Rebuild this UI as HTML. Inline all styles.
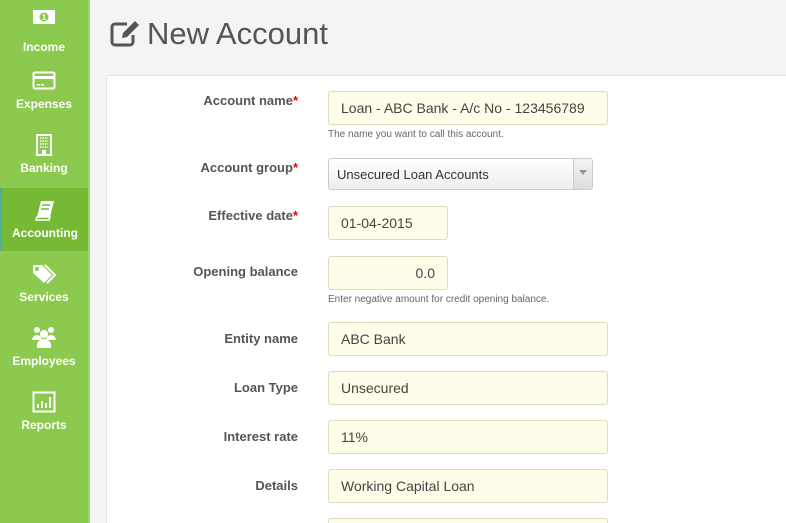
<!DOCTYPE html><html><head><style>
html,body{margin:0;padding:0;overflow:hidden;width:786px;height:523px}
body{font-family:"Liberation Sans",sans-serif}
#w{position:relative;width:786px;height:523px;overflow:hidden;background:#f3f4f6}
.sb{position:absolute;left:0;top:0;width:88px;height:523px;background:#8bc94f;border-right:2px solid #9fd66a}
.it{position:absolute;left:0;width:88px;text-align:center;color:#fff;font-weight:bold;font-size:12px}
.it svg{display:block;margin:0 auto}
.act{background:#76b935;border-left:2px solid #4cb0a0;box-sizing:border-box}
h1{position:absolute;left:147px;top:16px;margin:0;font-weight:normal;font-size:31px;color:#555}
.panel{position:absolute;left:106px;top:75px;width:680px;height:448px;background:#fff;border:1px solid #e1e3e6;border-bottom:0;border-right:0;border-radius:3px 0 0 0}
.l{position:absolute;right:488px;width:200px;text-align:right;font-weight:bold;font-size:13px;color:#555}
.l b{color:#e00}
.in{position:absolute;left:328px;height:32px;border:1px solid #dfdcc0;background:#fdfde9;border-radius:3px;font-size:14px;color:#444;line-height:32px;padding-left:12px;width:266px}
.h{position:absolute;left:328px;font-size:10px;color:#666}
</style></head><body><div id="w">
<div class="sb">
<div class="it" style="top:0"><svg width="24" height="20" viewBox="0 0 24 20" style="margin-top:7px"><rect x="1" y="3" width="22" height="14" fill="#fff"/><circle cx="12" cy="10" r="4.5" fill="#8bc94f"/><text x="12" y="13" font-size="8" text-anchor="middle" fill="#fff" font-family="Liberation Sans">1</text></svg><div style="margin-top:13px">Income</div></div>
<div class="it" style="top:70px"><svg width="24" height="20" viewBox="0 0 24 20"><rect x="1.5" y="2.5" width="21" height="16" rx="1.5" fill="none" stroke="#fff" stroke-width="2"/><rect x="1" y="6" width="22" height="3" fill="#fff"/><rect x="5" y="14" width="3" height="1.5" fill="#fff"/><rect x="9" y="14" width="3" height="1.5" fill="#fff"/></svg><div style="margin-top:7px">Expenses</div></div>
<div class="it" style="top:134px"><svg width="20" height="22" viewBox="0 0 20 22"><rect x="3" y="1" width="14" height="20" fill="none" stroke="#fff" stroke-width="2"/><path d="M6 4h8M6 7h8M6 10h8M6 13h8" stroke="#fff" stroke-width="1.5" stroke-dasharray="1.5 1"/><rect x="8" y="16" width="4" height="5" fill="#fff"/></svg><div style="margin-top:5px">Banking</div></div>
<div class="it act" style="top:188px;height:63px"><svg width="22" height="22" viewBox="0 0 22 22" style="margin-top:11px"><path d="M7 2h13l-4 16H3z" fill="#fff"/><path d="M3 18h13l-1 3H2z" fill="none" stroke="#fff" stroke-width="1.5"/><path d="M8 6h8M7 10h8" stroke="#76b935" stroke-width="1.5"/></svg><div style="margin-top:5px">Accounting</div></div>
<div class="it" style="top:263px"><svg width="26" height="22" viewBox="0 0 26 22"><path d="M2 2h9l10 10-8 8L2 10z" fill="#fff"/><circle cx="6" cy="6" r="2" fill="#8bc94f"/><path d="M14 2l10 10-8 8" fill="none" stroke="#fff" stroke-width="2"/></svg><div style="margin-top:5px">Services</div></div>
<div class="it" style="top:326px"><svg width="26" height="22" viewBox="0 0 26 22"><circle cx="6" cy="4" r="3" fill="#fff"/><circle cx="20" cy="4" r="3" fill="#fff"/><circle cx="13" cy="8" r="4" fill="#fff"/><path d="M1 14a5 5 0 0 1 10 0zM15 14a5 5 0 0 1 10 0z" fill="#fff"/><path d="M6 22v-3a7 6 0 0 1 14 0v3z" fill="#fff"/></svg><div style="margin-top:6px">Employees</div></div>
<div class="it" style="top:391px"><svg width="24" height="22" viewBox="0 0 24 22"><rect x="1.5" y="1.5" width="21" height="19" fill="none" stroke="#fff" stroke-width="2"/><rect x="5" y="13" width="2" height="4" fill="#fff"/><rect x="9" y="10" width="2" height="7" fill="#fff"/><rect x="13" y="12" width="2" height="5" fill="#fff"/><rect x="17" y="6" width="2" height="11" fill="#fff"/></svg><div style="margin-top:5px">Reports</div></div>
</div>
<svg style="position:absolute;left:110px;top:20px" width="33" height="27" viewBox="0 0 33 27"><path d="M17 4H5a3 3 0 0 0-3 3v15a3 3 0 0 0 3 3h15a3 3 0 0 0 3-3v-7" fill="none" stroke="#555" stroke-width="3"/><path d="M12 18l1-5L25 1l4 4-12 12z" fill="#555"/></svg>
<h1>New Account</h1>
<div class="panel"></div>
<div class="l" style="top:93px">Account name<b>*</b></div>
<div class="in" style="top:91px">Loan - ABC Bank - A/c No - 123456789</div>
<div class="h" style="top:129px">The name you want to call this account.</div>
<div class="l" style="top:160px">Account group<b>*</b></div>
<div style="position:absolute;left:328px;top:158px;height:32px;border:1px solid #ccc;border-radius:3px;background:linear-gradient(#fff,#eee);font-size:13px;color:#333;line-height:31px;padding-left:8px;box-sizing:border-box;width:265px">Unsecured Loan Accounts<div style="position:absolute;right:0;top:0;width:18px;height:30px;border-left:1px solid #ccc;background:linear-gradient(#f4f4f4,#ddd)"><div style="position:absolute;left:5px;top:11px;border:4px solid transparent;border-top:5px solid #999"></div></div></div>
<div class="l" style="top:208px">Effective date<b>*</b></div>
<div class="in" style="top:206px;width:106px">01-04-2015</div>
<div class="l" style="top:264px">Opening balance</div>
<div class="in" style="top:256px;text-align:right;padding:0 12px 0 0;width:106px">0.0</div>
<div class="h" style="top:294px">Enter negative amount for credit opening balance.</div>
<div class="l" style="top:331px">Entity name</div>
<div class="in" style="top:322px">ABC Bank</div>
<div class="l" style="top:380px">Loan Type</div>
<div class="in" style="top:371px">Unsecured</div>
<div class="l" style="top:429px">Interest rate</div>
<div class="in" style="top:420px">11%</div>
<div class="l" style="top:478px">Details</div>
<div class="in" style="top:469px">Working Capital Loan</div>
<div class="in" style="top:518px;height:4px;border-bottom:0;border-radius:3px 3px 0 0"></div>
</div></body></html>
